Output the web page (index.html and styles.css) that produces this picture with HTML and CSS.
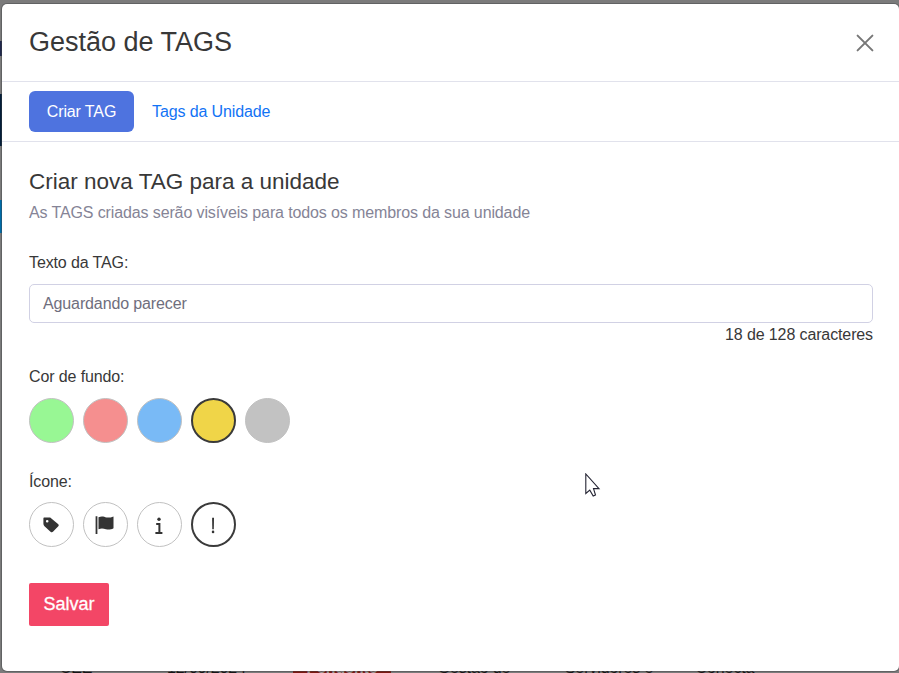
FILE: index.html
```html
<!DOCTYPE html>
<html lang="pt-BR">
<head>
<meta charset="utf-8">
<title>Gestão de TAGS</title>
<link rel="stylesheet" href="styles.css">
</head>
<body>
<div class="backdrop">
  <i class="sliver sliver-menu"></i>
  <i class="sliver sliver-nav"></i>
  <i class="sliver sliver-link"></i>
  <div class="table-row">
    <span class="cell cell-unit">CEE</span>
    <span class="cell cell-date">12/09/2024</span>
    <span class="cell cell-status"><b class="status">Pendente</b></span>
    <span class="cell cell-area">Gestão de</span>
    <span class="cell cell-staff">Servidores e</span>
    <span class="cell cell-system">Conecta</span>
  </div>
</div>
<main class="modal">
  <header class="modal-header">
    <h1 class="title">Gestão de TAGS</h1>
    <button class="close" aria-label="Fechar">
      <svg width="18" height="18" viewBox="0 0 18 18"><path d="M1.6 1.6 16.4 16.4M16.4 1.6 1.6 16.4" fill="none" stroke="#777" stroke-width="2" stroke-linecap="round"/></svg>
    </button>
  </header>
  <nav class="tabs">
    <button class="tab tab-active">Criar TAG</button>
    <button class="tab">Tags da Unidade</button>
  </nav>
  <section class="content">
    <h2 class="subtitle">Criar nova TAG para a unidade</h2>
    <p class="hint">As TAGS criadas serão visíveis para todos os membros da sua unidade</p>
    <div class="label label-text">Texto da TAG:</div>
    <div class="field">Aguardando parecer</div>
    <div class="counter">18 de 128 caracteres</div>
    <div class="label label-color">Cor de fundo:</div>
    <div class="options">
      <button class="circle green"></button>
      <button class="circle red"></button>
      <button class="circle blue"></button>
      <button class="circle yellow selected"></button>
      <button class="circle gray"></button>
    </div>
    <div class="label label-icon">Ícone:</div>
    <div class="options icons">
      <button class="circle"><svg width="20" height="20" viewBox="0 0 20 20"><path fill="#333" fill-rule="evenodd" d="M3.1 2.6H9.2L17.3 9.2Q18.3 10.2 17.3 11.3L12.2 16.6Q10.9 17.8 9.5 16.7L3.5 11.2Q2.4 10.1 2.4 8.8V3.4Q2.4 2.6 3.1 2.6ZM6.2 4.9A1.3 1.3 0 1 0 6.2 7.5A1.3 1.3 0 1 0 6.2 4.9Z"/></svg></button>
      <button class="circle"><svg width="20" height="20" viewBox="0 0 20 20"><path fill="#333" d="M.6 1.2H2.4V18.9H.6ZM3.5 2.2C7 .6 9.1 1.8 11.5 2.4C13.7 2.8 15.7 2.5 18.5 1.4V13.2C15.9 14.7 13.5 14.9 11 14.3C8.3 13.5 6.3 13.3 3.5 14.2Z"/></svg></button>
      <button class="circle"><svg width="20" height="20" viewBox="0 0 20 20"><circle cx="10" cy="4.2" r="1.7" fill="#333"/><path fill="none" stroke="#333" stroke-width="2" d="M7.2 9H10.4V18M6.4 18H13.4"/></svg></button>
      <button class="circle selected"><svg width="20" height="20" viewBox="0 0 20 20"><path fill="#333" d="M9.1 2.8H11L10.8 14.2H9.3Z"/><circle cx="10.05" cy="16.9" r="1.3" fill="#333"/></svg></button>
    </div>
    <button class="save">Salvar</button>
  </section>
</main>
<svg class="cursor" width="16" height="25" viewBox="0 0 16 25"><path fill="#fff" stroke="#242433" stroke-width="1.1" d="M.8 1V20.5L4.8 17.2L8.2 23L10.5 22L8.5 15.6H14Z"/></svg>
</body>
</html>
```
FILE: styles.css
```css
* { box-sizing: border-box; }
body {
  margin: 0;
  width: 899px;
  height: 673px;
  overflow: hidden;
  padding: 4px 0 2px 2px;
  background: #7b7b7b;
  color: #383838;
  font: 16px/24px "Liberation Sans", Arial, sans-serif;
  letter-spacing: -0.12px;
}
button { font: inherit; letter-spacing: inherit; border: 0; padding: 0; background: none; color: inherit; }
h1, h2, p { margin: 0; font-weight: 400; }
svg { display: block; flex: none; }

.backdrop { position: absolute; inset: 0; overflow: hidden; }
.sliver { position: absolute; left: 0; width: 2px; }
.sliver-menu { top: 41px; height: 15px; background: #20284b; }
.sliver-nav { top: 94px; height: 52px; background: #041e39; }
.sliver-link { top: 200px; height: 33px; background: #006ca8; }
.table-row { position: absolute; top: 657px; left: 0; display: flex; color: #161616; line-height: 21px; }
.cell { flex: none; text-align: center; white-space: nowrap; }
.cell-unit { width: 152px; }
.cell-date { width: 109px; }
.cell-status { width: 162px; }
.cell-area { width: 102px; }
.cell-staff { width: 168px; }
.cell-system { width: 64px; }
.status { display: inline-block; width: 98px; background: #7b1912; color: #999; }

.modal {
  position: relative;
  height: 667px;
  background: #fff;
  border-radius: 5px;
  box-shadow: 0 0 0 1px rgba(60, 62, 66, 0.4);
}
.modal-header {
  display: flex;
  justify-content: space-between;
  align-items: center;
  height: 78px;
  padding: 0 25px 0 27px;
  border-bottom: 1px solid #e1e2ec;
}
.title { font-size: 27px; line-height: 36px; margin-top: -2px; letter-spacing: 0; }
.close { margin-top: 1px; }
.tabs {
  display: flex;
  align-items: center;
  height: 60px;
  padding: 0 27px;
  border-bottom: 1px solid #e1e2ec;
}
.tab { height: 41px; padding: 0 18px; color: #1273f5; white-space: nowrap; }
.tab-active { width: 105px; padding: 0; color: #fff; background: #4e73df; border-radius: 6px; }
.content { padding: 25px 26px 0 27px; }
.subtitle { font-size: 22.5px; line-height: 30px; letter-spacing: 0; }
.hint { margin-top: 4px; color: #858496; }
.label-text { margin-top: 26px; }
.field {
  height: 39px;
  margin-top: 9px;
  padding: 0 13px;
  border: 1px solid #d1d1e4;
  border-radius: 5px;
  line-height: 37px;
  color: #6f6e7d;
}
.counter { text-align: right; }
.label-color { margin-top: 18px; }
.options { display: flex; gap: 9px; margin-top: 9px; }
.icons { margin-top: 8px; }
.icons svg { margin-left: -1px; }
.circle {
  display: flex;
  align-items: center;
  justify-content: center;
  width: 45px;
  height: 45px;
  border: 1px solid #c1c1c1;
  border-radius: 50%;
}
.green { background: #98f794; }
.red { background: #f58f8f; }
.blue { background: #79baf6; }
.yellow { background: #f0d548; }
.gray { background: #c2c2c2; }
.selected { border: 2px solid #3a3a3a; }
.label-icon { margin-top: 27px; }
.save {
  width: 80px;
  height: 43px;
  margin-top: 36px;
  padding-bottom: 2px;
  border-radius: 2px;
  background: #f34666;
  color: #fff;
  font-size: 18px;
  letter-spacing: 0;
  -webkit-text-stroke: 0.3px #fff;
}
.cursor { position: absolute; left: 585px; top: 473px; }
```
